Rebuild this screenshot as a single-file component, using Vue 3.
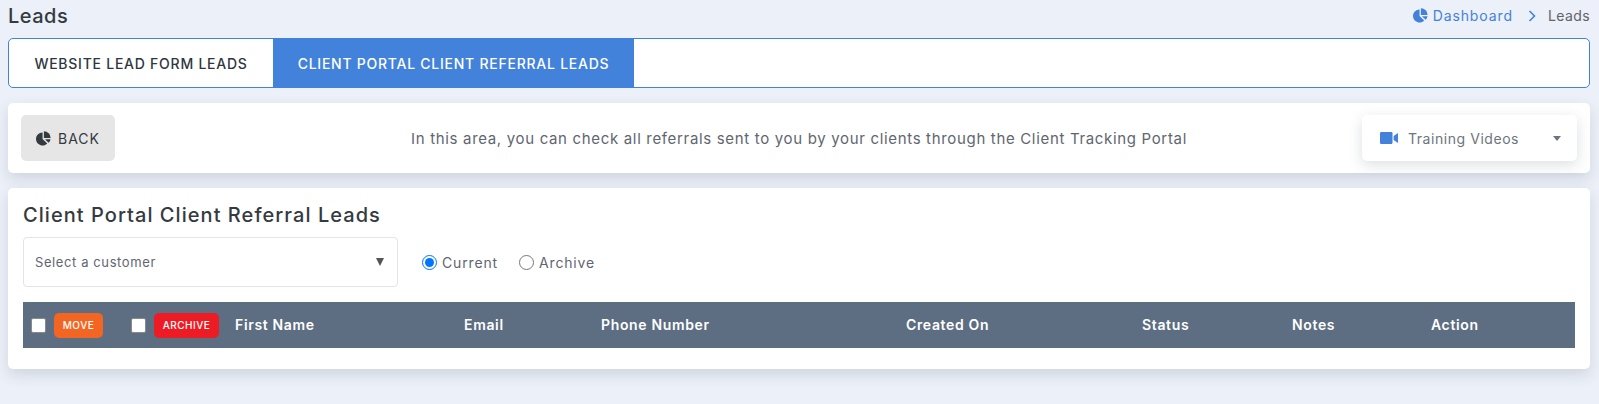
<script setup>
const columns = [
  { label: 'First Name', width: 229 },
  { label: 'Email', width: 137 },
  { label: 'Phone Number', width: 305 },
  { label: 'Created On', width: 236 },
  { label: 'Status', width: 150 },
  { label: 'Notes', width: 139 },
  { label: 'Action', width: 144 },
]
</script>

<template>
  <div class="page">
    <header class="topbar">
      <h1>Leads</h1>
      <nav class="crumbs">
        <svg class="pie" viewBox="0 0 16 16"><path d="M7 1.5A7 7 0 1 0 12 13.4L7 8.6z" /><path d="M8.4 0.4A7 7 0 0 1 15.6 7.4H8.4z" /><path d="M9.6 8.9h6A7 7 0 0 1 13.4 12.6z" /></svg>
        <a>Dashboard</a>
        <svg class="chev" viewBox="0 0 8 12"><path d="M1.5 1l5 5-5 5" /></svg>
        <span>Leads</span>
      </nav>
    </header>

    <div class="tabs">
      <div class="tab">WEBSITE LEAD FORM LEADS</div>
      <div class="tab active">CLIENT PORTAL CLIENT REFERRAL LEADS</div>
    </div>

    <section class="card intro">
      <button class="back">
        <svg class="pie" viewBox="0 0 16 16"><path d="M7 1.5A7 7 0 1 0 12 13.4L7 8.6z" /><path d="M8.4 0.4A7 7 0 0 1 15.6 7.4H8.4z" /><path d="M9.6 8.9h6A7 7 0 0 1 13.4 12.6z" /></svg>
        BACK
      </button>
      <p>In this area, you can check all referrals sent to you by your clients through the Client Tracking Portal</p>
      <div class="videos">
        <svg class="cam" viewBox="0 0 18 12"><rect x="0" y="0" width="12.5" height="12" rx="1.2" /><path d="M13.6 4L18 1v10l-4.4-3z" /></svg>
        <span>Training Videos</span>
        <i class="caret"></i>
      </div>
    </section>

    <section class="card leads">
      <h2>Client Portal Client Referral Leads</h2>
      <div class="filters">
        <div class="select">
          <span>Select a customer</span>
          <i class="arrow"></i>
        </div>
        <label class="radio"><input type="radio" name="scope" checked /> Current</label>
        <label class="radio"><input type="radio" name="scope" /> Archive</label>
      </div>
      <table>
        <thead>
          <tr>
            <th class="actions">
              <div class="bulk">
                <span class="box"></span>
                <span class="pill move">MOVE</span>
                <span class="box second"></span>
                <span class="pill archive">ARCHIVE</span>
              </div>
            </th>
            <th v-for="col in columns" :key="col.label" :style="{ width: col.width + 'px' }">{{ col.label }}</th>
          </tr>
        </thead>
      </table>
    </section>
  </div>
</template>

<style scoped>
.page {
  box-sizing: border-box;
  height: 404px;
  padding: 0 9px 0 8px;
  background: #ecf0f8;
  font-family: Inter, "Open Sans", sans-serif;
  color: #343a40;
  overflow: hidden;
}
.topbar {
  display: flex;
  justify-content: space-between;
  align-items: center;
  height: 31px;
  margin-bottom: 7px;
}
h1 {
  margin: 0;
  font-size: 20px;
  font-weight: 500;
  letter-spacing: 0.5px;
  color: #343a40;
}
.crumbs {
  display: flex;
  align-items: center;
  font-size: 14px;
  letter-spacing: 0.4px;
  color: #5f6368;
}
.crumbs .pie {
  width: 15px;
  height: 15px;
  margin-right: 5px;
  fill: #4382da;
}
.crumbs a {
  color: #4382da;
  letter-spacing: 0.9px;
}
.chev {
  width: 8px;
  height: 12px;
  margin: 0 12px 0 15px;
  fill: none;
  stroke: #4382da;
  stroke-width: 1.6;
}
.tabs {
  display: flex;
  height: 50px;
  box-sizing: border-box;
  background: #fff;
  border: 1px solid #4382da;
  border-radius: 5px;
  margin-bottom: 15px;
}
.tab {
  display: flex;
  align-items: center;
  justify-content: center;
  width: 264px;
  font-size: 14px;
  font-weight: 500;
  letter-spacing: 0.75px;
  color: #2f3640;
}
.tab.active {
  width: 361px;
  background: #4382da;
  color: #fff;
}
.card {
  background: #fff;
  border-radius: 5px;
  box-shadow: 0 6px 14px rgba(60, 75, 100, 0.16);
}
.intro {
  display: grid;
  grid-template-columns: 215px 1fr 215px;
  align-items: center;
  height: 70px;
  padding: 0 13px;
  box-sizing: border-box;
  margin-bottom: 15px;
}
.back {
  display: flex;
  align-items: center;
  justify-content: center;
  gap: 7px;
  width: 94px;
  height: 46px;
  border: 0;
  border-radius: 5px;
  background: #e6e6e6;
  font: inherit;
  font-size: 14px;
  letter-spacing: 1px;
  color: #343a40;
}
.back .pie {
  width: 15px;
  height: 15px;
  fill: #343a40;
}
.intro p {
  margin: 0;
  text-align: center;
  font-size: 15px;
  letter-spacing: 0.67px;
  color: #5f6670;
  white-space: nowrap;
}
.videos {
  display: flex;
  align-items: center;
  height: 46px;
  box-sizing: border-box;
  padding: 0 16px 0 18px;
  border-radius: 5px;
  background: #fff;
  box-shadow: 0 4px 14px rgba(60, 75, 100, 0.18);
  font-size: 14px;
  letter-spacing: 0.55px;
  color: #6c757d;
}
.cam {
  width: 18px;
  height: 12px;
  margin-right: 10px;
  fill: #4382da;
}
.caret {
  margin-left: auto;
  border: 4px solid transparent;
  border-top: 5px solid #6c757d;
  border-bottom: 0;
}
.leads {
  height: 181px;
  padding: 15px 15px 0;
  box-sizing: border-box;
}
h2 {
  margin: 0 0 9px;
  height: 25px;
  line-height: 25px;
  font-size: 20px;
  font-weight: 500;
  letter-spacing: 1.05px;
  color: #343a40;
}
.filters {
  display: flex;
  align-items: center;
  margin-bottom: 15px;
}
.select {
  display: flex;
  align-items: center;
  justify-content: space-between;
  width: 375px;
  height: 50px;
  box-sizing: border-box;
  padding: 0 13px 0 11px;
  margin-right: 24px;
  border: 1px solid #e2e4e8;
  border-radius: 4px;
  font-size: 13px;
  letter-spacing: 0.6px;
  color: #5f6670;
}
.arrow {
  border: 4px solid transparent;
  border-top: 8px solid #555;
  border-bottom: 0;
}
.radio {
  display: flex;
  align-items: center;
  gap: 5px;
  margin-right: 21px;
  font-size: 14px;
  letter-spacing: 0.85px;
  color: #5f6670;
}
.radio input {
  width: 15px;
  height: 15px;
  margin: 0;
}
table {
  width: 1552px;
  height: 46px;
  border-collapse: collapse;
  table-layout: fixed;
  background: #5d6d82;
}
th {
  padding: 0 0 2px;
  text-align: left;
  font-size: 14px;
  font-weight: 600;
  letter-spacing: 0.65px;
  color: #fff;
}
.actions {
  width: 212px;
  padding: 0;
}
.bulk {
  display: flex;
  align-items: center;
  padding-left: 8px;
}
.box {
  width: 15px;
  height: 15px;
  box-sizing: border-box;
  background: #fff;
  border: 1px solid #8a8a8a;
  border-radius: 2px;
}
.second {
  margin-left: 28px;
}
.pill {
  display: flex;
  align-items: center;
  justify-content: center;
  height: 25px;
  margin-left: 8px;
  border-radius: 5px;
  font-size: 10px;
  font-weight: 500;
  letter-spacing: 0.5px;
  color: #fff;
}
.move {
  width: 49px;
  background: #f26522;
}
.archive {
  width: 65px;
  background: #ed1c24;
}
</style>

<style>
body {
  margin: 0;
}
</style>
